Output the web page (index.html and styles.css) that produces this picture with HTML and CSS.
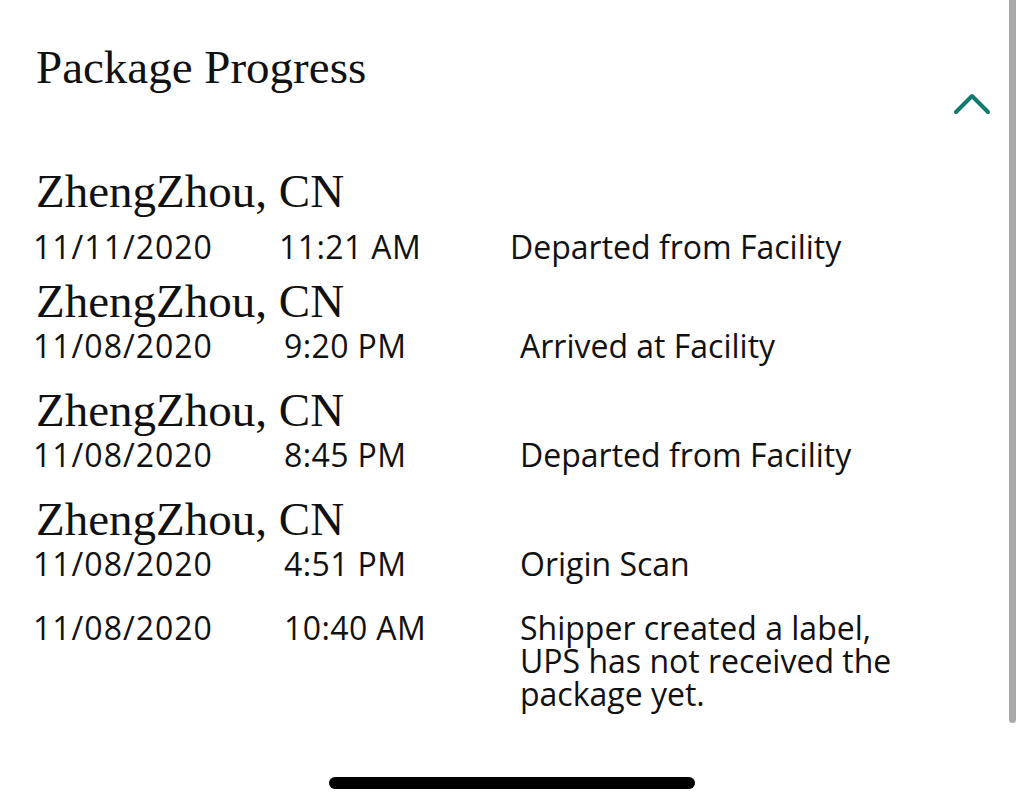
FILE: index.html
```html
<!DOCTYPE html>
<html lang="en">
<head>
<meta charset="utf-8">
<title>Package Progress</title>
<link rel="stylesheet" href="styles.css">
</head>
<body>
<main class="page">
  <header class="header">
    <h1 class="title">Package Progress</h1>
    <svg class="chevron" width="40" height="24" viewBox="0 0 40 24" aria-hidden="true">
      <polyline points="4,20 20,4 36,20" fill="none" stroke="#117a6e" stroke-width="4" stroke-linecap="round" stroke-linejoin="round"/>
    </svg>
  </header>

  <section class="events">
    <div class="event event-first">
      <div class="loc">ZhengZhou, CN</div>
      <div class="row row-first">
        <span class="date">11/11/2020</span>
        <span class="time">11:21 AM</span>
        <span class="desc">Departed from Facility</span>
      </div>
    </div>
    <div class="event">
      <div class="loc">ZhengZhou, CN</div>
      <div class="row">
        <span class="date">11/08/2020</span>
        <span class="time">9:20 PM</span>
        <span class="desc">Arrived at Facility</span>
      </div>
    </div>
    <div class="event">
      <div class="loc">ZhengZhou, CN</div>
      <div class="row">
        <span class="date">11/08/2020</span>
        <span class="time">8:45 PM</span>
        <span class="desc">Departed from Facility</span>
      </div>
    </div>
    <div class="event">
      <div class="loc">ZhengZhou, CN</div>
      <div class="row">
        <span class="date">11/08/2020</span>
        <span class="time">4:51 PM</span>
        <span class="desc">Origin Scan</span>
      </div>
    </div>
    <div class="event event-last">
      <div class="row row-last">
        <span class="date">11/08/2020</span>
        <span class="time">10:40 AM</span>
        <span class="desc">Shipper created a label, UPS has not received the package yet.</span>
      </div>
    </div>
  </section>
</main>
<div class="scrollbar"></div>
<div class="home-indicator"></div>
</body>
</html>
```
FILE: styles.css
```css
html, body {
  margin: 0;
  padding: 0;
  background: #ffffff;
}

body {
  width: 1024px;
  height: 810px;
  overflow: hidden;
  position: relative;
  color: #111111;
}

.page {
  padding: 42px 32px 0 36px;
}

.header {
  display: flex;
  justify-content: space-between;
  align-items: flex-start;
}

.title {
  margin: 0;
  font-family: "Liberation Serif", "Times New Roman", serif;
  font-weight: 400;
  font-size: 47px;
  line-height: 50px;
}

.chevron {
  display: block;
  margin-top: 50px;
}

.events {
  margin-top: 50px;
  display: flex;
  flex-direction: column;
}

.event + .event {
  margin-top: 19px;
}

.event-first + .event {
  margin-top: 9px;
}

.event-last {
  margin-top: 27px !important;
}

.loc {
  font-family: "Liberation Serif", "Times New Roman", serif;
  font-size: 47px;
  line-height: 50px;
}

.row {
  display: grid;
  grid-template-columns: 251px 236px 400px;
  margin-left: -3px;
  font-family: "Open Sans", "Noto Sans", sans-serif;
  font-weight: 400;
  font-size: 32px;
  line-height: 40px;
}

.date {
  letter-spacing: 1px;
}

.time {
  letter-spacing: 0.4px;
}

.row-first {
  grid-template-columns: 246px 231px 400px;
  margin-top: 11px;
}

.row-last {
  line-height: 33px;
}

.scrollbar {
  position: absolute;
  top: 0;
  left: 1009px;
  width: 7px;
  height: 723px;
  background: #a9a9a9;
  border-radius: 0 0 4px 4px;
}

.home-indicator {
  position: absolute;
  left: 329px;
  top: 777px;
  width: 366px;
  height: 12px;
  background: #000000;
  border-radius: 6px;
}
```
